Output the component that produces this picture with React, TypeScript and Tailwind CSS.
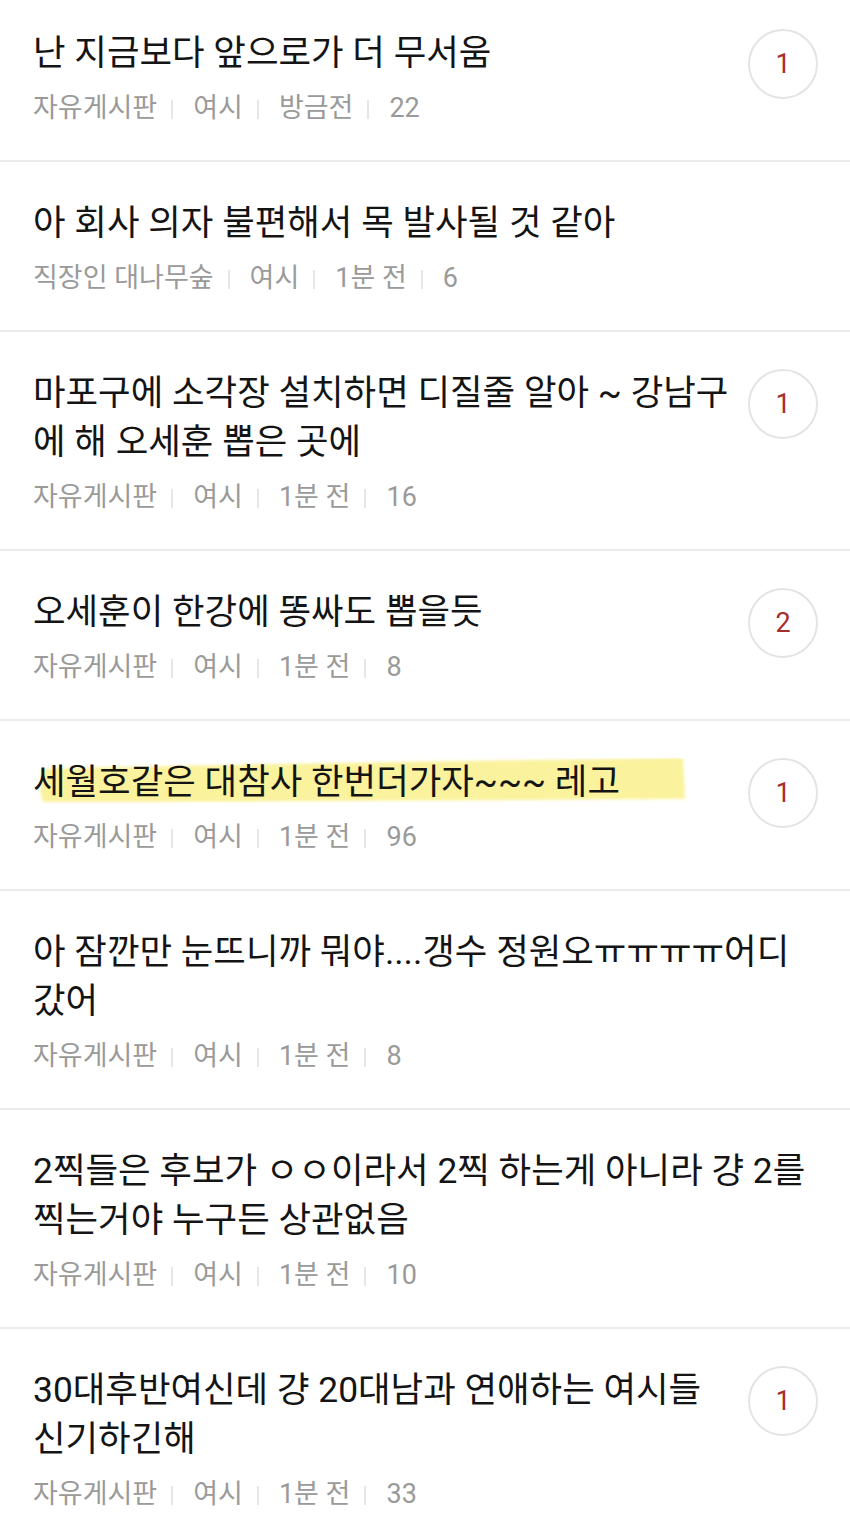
type Post = {
  title: string;
  board: string;
  author: string;
  time: string;
  views: number;
  comments?: number;
  highlight?: boolean;
};

const posts: Post[] = [
  { title: '난 지금보다 앞으로가 더 무서움', board: '자유게시판', author: '여시', time: '방금전', views: 22, comments: 1 },
  { title: '아 회사 의자 불편해서 목 발사될 것 같아', board: '직장인 대나무숲', author: '여시', time: '1분 전', views: 6 },
  { title: '마포구에 소각장 설치하면 디질줄 알아 ~ 강남구에 해 오세훈 뽑은 곳에', board: '자유게시판', author: '여시', time: '1분 전', views: 16, comments: 1 },
  { title: '오세훈이 한강에 똥싸도 뽑을듯', board: '자유게시판', author: '여시', time: '1분 전', views: 8, comments: 2 },
  { title: '세월호같은 대참사 한번더가자~~~ 레고', board: '자유게시판', author: '여시', time: '1분 전', views: 96, comments: 1, highlight: true },
  { title: '아 잠깐만 눈뜨니까 뭐야....갱수 정원오ㅠㅠㅠㅠ어디갔어', board: '자유게시판', author: '여시', time: '1분 전', views: 8 },
  { title: '2찍들은 후보가 ㅇㅇ이라서 2찍 하는게 아니라 걍 2를 찍는거야 누구든 상관없음', board: '자유게시판', author: '여시', time: '1분 전', views: 10 },
  { title: '30대후반여신데 걍 20대남과 연애하는 여시들 신기하긴해', board: '자유게시판', author: '여시', time: '1분 전', views: 33, comments: 1 },
];

const Divider = () => <span className="ml-[14px] mr-[20px] inline-block h-[19px] w-[2px] bg-[#e6e6e6] align-[-2px]" />;

const Marker = () => (
  <svg
    className="pointer-events-none absolute left-0 top-0 z-0"
    width="680"
    height="52"
    viewBox="0 0 680 52"
  >
    <defs>
      <filter id="soft" x="-5%" y="-20%" width="110%" height="140%">
        <feGaussianBlur stdDeviation="1.8" />
      </filter>
    </defs>
    <path
      d="M9 11 C120 8 400 3 650 0 L652 41 C450 42 200 44 10 44 C6 33 8 20 9 11 Z"
      fill="#faf29c"
      filter="url(#soft)"
    />
  </svg>
);

const PostRow = ({ post }: { post: Post }) => (
  <li className="flex items-start border-b-2 border-[#ebebeb] pl-[33px] pr-[32px] pt-[37px] pb-[35px]">
    <div className="min-w-0 flex-1">
      <h2 className="relative text-[35.4px] leading-[49px] font-normal text-[#141414]">
        {post.highlight && <Marker />}
        <span className="relative z-10">{post.title}</span>
      </h2>
      <p className="mt-[13px] text-[27px] leading-[34px] text-[#9a9a9a]">
        {post.board}
        <Divider />
        {post.author}
        <Divider />
        {post.time}
        <Divider />
        {post.views}
      </p>
    </div>
    {post.comments !== undefined && (
      <div className="ml-[16px] flex h-[70px] w-[70px] shrink-0 items-center justify-center rounded-full border-2 border-[#e4e4e4] text-[27px] text-[#a82e2a]">
        {post.comments}
      </div>
    )}
  </li>
);

const App = (): JSX.Element => {
  return (
    <div className="h-[1532px] w-full overflow-hidden bg-white font-['Roboto','Noto_Sans_CJK_KR',sans-serif]">
      {/* list starts a little above the fold */}
      <ul className="-mt-[8px]">
        {posts.map((post, i) => (
          <PostRow key={i} post={post} />
        ))}
      </ul>
    </div>
  );
};

export default App;
